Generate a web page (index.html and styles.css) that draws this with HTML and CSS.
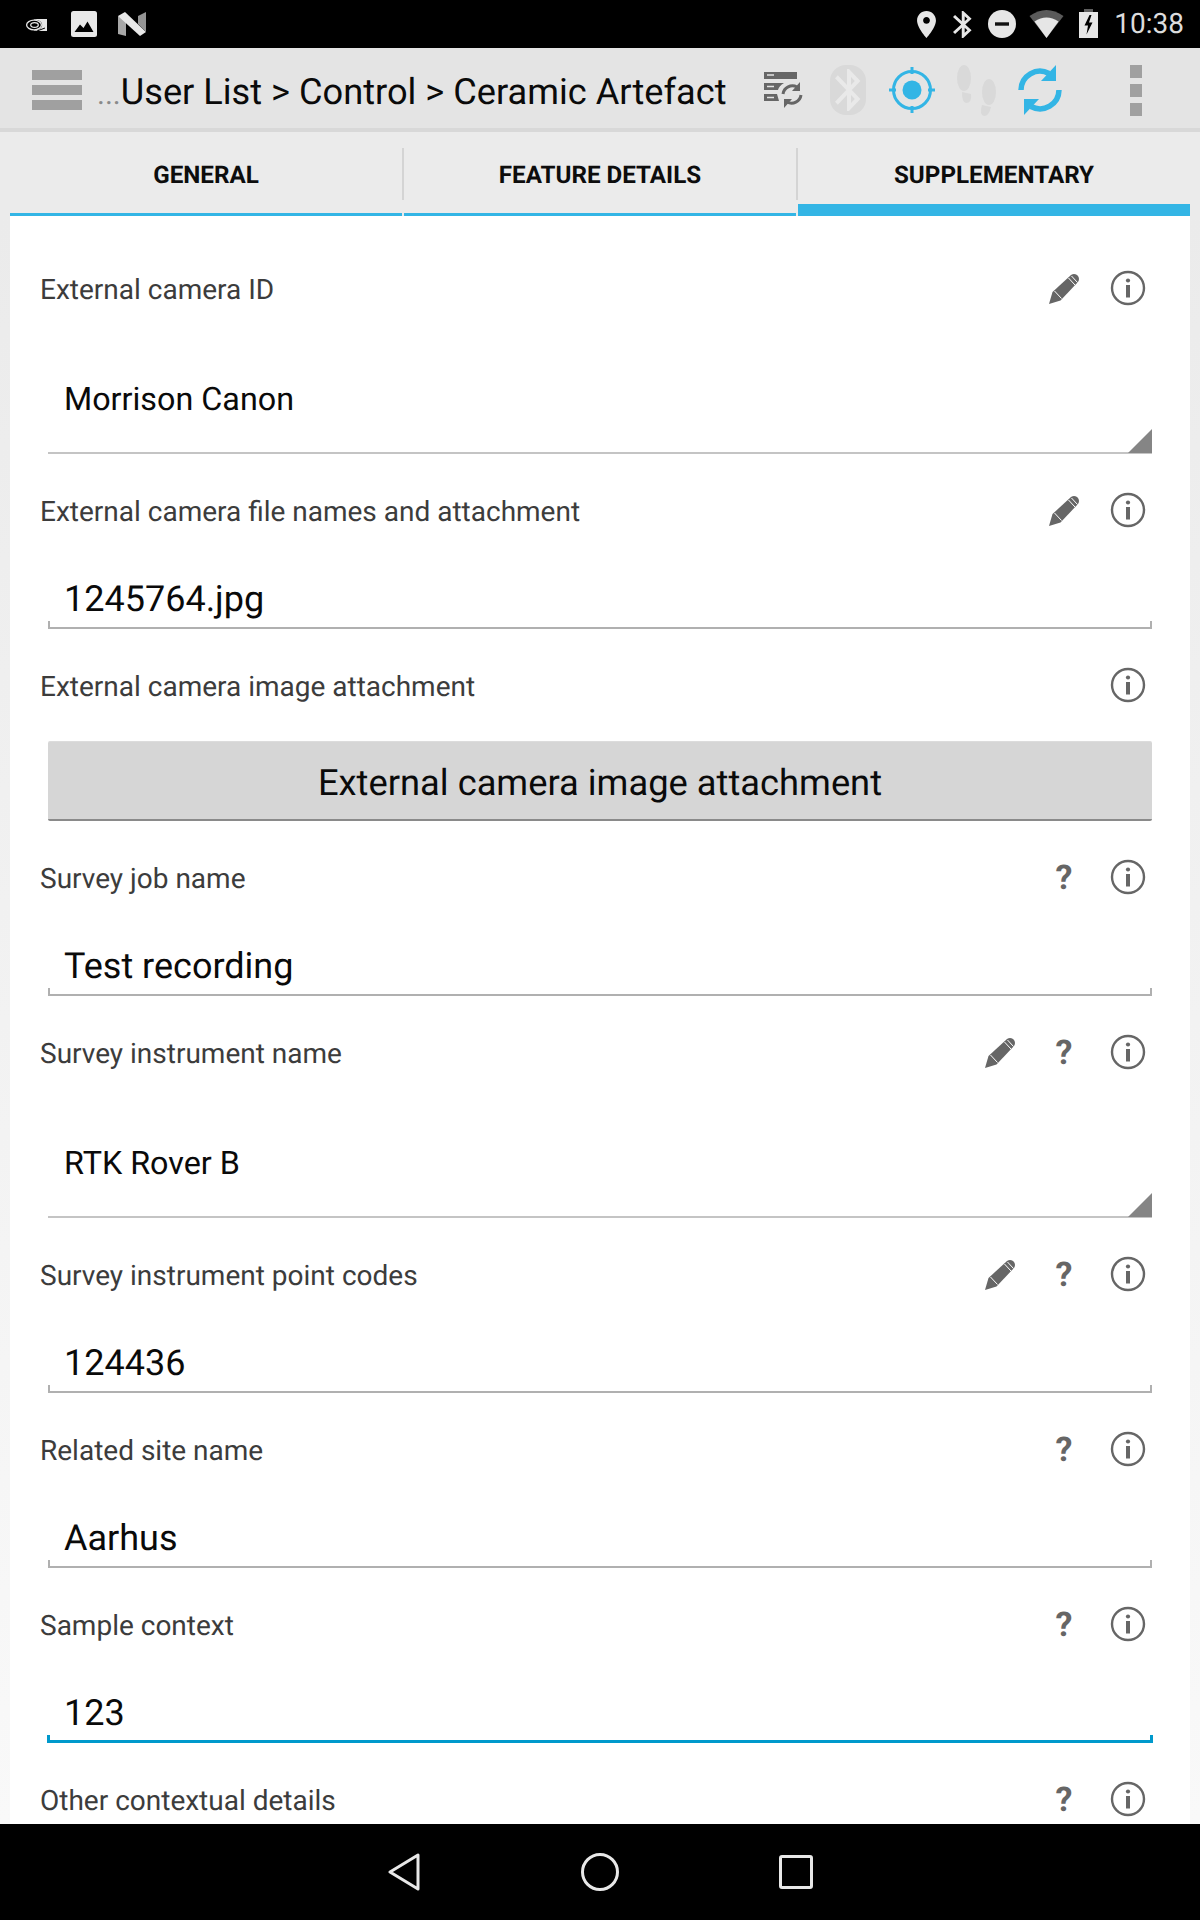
FILE: index.html
```html
<!DOCTYPE html>
<html lang="en">
<head>
<meta charset="utf-8">
<title>Ceramic Artefact</title>
<link rel="stylesheet" href="styles.css">
</head>
<body>
<svg class="defs" width="0" height="0" aria-hidden="true">
  <defs>
    <symbol id="pencil" viewBox="0 0 30 31">
      <path d="M0 31 L3.500 19 L22 2 Q25 0 28 2 L29 3 Q31 6 29 9 L11.500 27.500 Z" fill="#666"/>
      <path d="M5.500 18 L12.500 25.500 M19.500 5 L26 12 M22.500 3 L28.500 9.500" stroke="#fff" stroke-width="1" fill="none"/>
    </symbol>
    <symbol id="info" viewBox="0 0 36 36">
      <circle cx="18" cy="18" r="16" fill="none" stroke="#666" stroke-width="2.400"/>
      <circle cx="18" cy="10.500" r="2.100" fill="#666"/>
      <rect x="16" y="15" width="4" height="12.500" fill="#666"/>
    </symbol>
    <symbol id="bt" viewBox="0 0 24 24">
      <path d="M17.71 7.71 12 2h-1v7.59L6.41 5 5 6.41 10.59 12 5 17.59 6.41 19 11 14.41V22h1l5.71-5.71-4.3-4.29 4.3-4.29zM13 5.83l1.88 1.88L13 9.59V5.83zm1.88 10.46L13 18.17v-3.76l1.88 1.88z"/>
    </symbol>
  </defs>
</svg>

<div class="app">
  <header class="status">
    <div class="status-left">
      <svg class="s-nv" viewBox="0 0 22 14">
        <path d="M9 1 H22 V13 H9 Z" fill="#e6e6e6"/>
        <ellipse cx="9" cy="7" rx="8.200" ry="5.600" fill="#000"/>
        <ellipse cx="9" cy="7" rx="7.400" ry="4.800" fill="none" stroke="#e6e6e6" stroke-width="1.300"/>
        <ellipse cx="9.500" cy="7" rx="3.800" ry="2.400" fill="none" stroke="#e6e6e6" stroke-width="1.300"/>
        <path d="M12 13 L20 10" stroke="#000" stroke-width="1"/>
      </svg>
      <svg class="s-img" viewBox="0 0 26 26">
        <rect width="26" height="26" rx="2.500" fill="#e8e8e8"/>
        <path d="M3.500 21 L9 13.500 L12.500 17 L16.500 10.500 L22.500 21 Z" fill="#000"/>
      </svg>
      <svg class="s-n" viewBox="0 0 28 24">
        <path d="M0 4 L8 8 V24 L0 22 Z" fill="#a8a8a8"/>
        <path d="M0 4 L7 0 L28 20 L22 24 Z" fill="#e8e8e8"/>
        <path d="M20 4 L28 0 V20 L20 12 Z" fill="#949494"/>
      </svg>
    </div>
    <div class="status-right">
      <svg class="s-loc" viewBox="5 2 14 20"><path fill="#e6e6e6" d="M12 2C8.130 2 5 5.130 5 9c0 5.250 7 13 7 13s7-7.750 7-13c0-3.870-3.130-7-7-7zm0 9.500c-1.380 0-2.500-1.120-2.500-2.500s1.120-2.500 2.500-2.500 2.500 1.120 2.500 2.500-1.120 2.500-2.500 2.500z"/></svg>
      <svg class="s-bt" viewBox="5 2 13 20" preserveAspectRatio="none"><use href="#bt" fill="#e6e6e6" width="24" height="24"/></svg>
      <svg class="s-dnd" viewBox="0 0 28 28">
        <circle cx="14" cy="14" r="14" fill="#e6e6e6"/>
        <rect x="7" y="12.300" width="14" height="3.400" fill="#111"/>
      </svg>
      <svg class="s-wifi" viewBox="0 0 34 28">
        <path d="M0 6 Q17 -6 34 6 L17 28 Z" fill="#5a5a5a"/>
        <path d="M5 11.500 Q17 3.500 29 11.500 L17 28 Z" fill="#e6e6e6"/>
      </svg>
      <svg class="s-bat" viewBox="0 0 19 29">
        <rect x="5" width="9" height="3" fill="#5f5f5f"/>
        <rect y="3" width="19" height="26" fill="#e6e6e6"/>
        <path d="M10.500 6 L5.500 16.500 H9 L7.500 25.500 L13.500 13.500 H10 L12.500 6 Z" fill="#000"/>
      </svg>
      <span class="clock">10:38</span>
    </div>
  </header>

  <div class="toolbar">
    <div class="menu"><i></i><i></i><i></i></div>
    <div class="title"><span class="dots">...</span>User List &gt; Control &gt; Ceramic Artefact</div>
    <div class="tools">
      <span class="tool">
        <svg class="t-server" viewBox="0 0 40 36">
          <path d="M0 0 H33 V7 H0 Z M0 11 H20 Q15 14 14 18 H0 Z M0 22 H13 L15 29 H0 Z" fill="#666"/>
          <path d="M3 3 H10 M3 14.500 H10 M3 25.500 H10" stroke="#e4e4e4" stroke-width="1.500"/>
          <path d="M19 22 A9.500 9.500 0 0 1 33 15 M37 23 A9.500 9.500 0 0 1 23 30" fill="none" stroke="#666" stroke-width="3"/>
          <path d="M36 10 V19 H28 Z M20 36 V27 H28 Z" fill="#666"/>
        </svg>
      </span>
      <span class="tool">
        <svg class="t-bt" viewBox="0 0 36 50">
          <rect width="36" height="50" rx="16" fill="#d9d9d9"/>
          <svg x="3" y="4" width="30" height="42" viewBox="4 2 15 20" preserveAspectRatio="none"><use href="#bt" fill="#e9e9e9" width="24" height="24"/></svg>
        </svg>
      </span>
      <span class="tool">
        <svg class="t-gps" viewBox="0 0 48 48">
          <circle cx="24" cy="24" r="18.500" fill="none" stroke="#33b5e5" stroke-width="3"/>
          <circle cx="24" cy="24" r="9.500" fill="#33b5e5"/>
          <path d="M24 1 V8 M24 40 V47 M1 24 H8 M40 24 H47" stroke="#33b5e5" stroke-width="3"/>
        </svg>
      </span>
      <span class="tool">
        <svg class="t-feet" viewBox="0 0 39 51">
          <g fill="#d9d9d9">
            <ellipse cx="7" cy="13" rx="7" ry="13"/>
            <path d="M5 27 L14 29 Q15 38 9 38 Q5 38 5 27 Z"/>
            <ellipse cx="32" cy="27" rx="7" ry="13"/>
            <path d="M25 40 L34 42 Q32 51 27 51 Q22 50 25 40 Z"/>
          </g>
        </svg>
      </span>
      <span class="tool">
        <svg class="t-sync" viewBox="0 0 48 52">
          <path d="M5 26 A19 19 0 0 1 33 9.500 M43 26 A19 19 0 0 1 15 42.500" fill="none" stroke="#33b5e5" stroke-width="5.500"/>
          <path d="M40 1 V17 H25 Z M8 51 V35 H23 Z" fill="#33b5e5"/>
        </svg>
      </span>
      <span class="tool-gap"></span>
      <span class="tool more"><i></i><i></i><i></i></span>
    </div>
  </div>

  <nav class="tabs">
    <div class="tab"><span>GENERAL</span></div>
    <div class="tab"><span>FEATURE DETAILS</span></div>
    <div class="tab active"><span>SUPPLEMENTARY</span></div>
  </nav>

  <main class="sheet">
    <div class="content">
      <section class="row">
        <div class="row-head"><span class="label">External camera ID</span>
          <span class="icons"><span class="ico"><svg class="pencil"><use href="#pencil"/></svg></span><span class="ico"><svg class="info"><use href="#info"/></svg></span></span></div>
        <div class="field select"><span class="value small">Morrison Canon</span></div>
      </section>
      <section class="row">
        <div class="row-head"><span class="label">External camera file names and attachment</span>
          <span class="icons"><span class="ico"><svg class="pencil"><use href="#pencil"/></svg></span><span class="ico"><svg class="info"><use href="#info"/></svg></span></span></div>
        <div class="field text"><span class="value">1245764.jpg</span></div>
      </section>
      <section class="row btn-row">
        <div class="row-head"><span class="label">External camera image attachment</span>
          <span class="icons"><span class="ico"><svg class="info"><use href="#info"/></svg></span></span></div>
        <div class="btn">External camera image attachment</div>
      </section>
      <section class="row">
        <div class="row-head"><span class="label">Survey job name</span>
          <span class="icons"><span class="ico q">?</span><span class="ico"><svg class="info"><use href="#info"/></svg></span></span></div>
        <div class="field text"><span class="value">Test recording</span></div>
      </section>
      <section class="row">
        <div class="row-head"><span class="label">Survey instrument name</span>
          <span class="icons"><span class="ico"><svg class="pencil"><use href="#pencil"/></svg></span><span class="ico q">?</span><span class="ico"><svg class="info"><use href="#info"/></svg></span></span></div>
        <div class="field select"><span class="value small">RTK Rover B</span></div>
      </section>
      <section class="row">
        <div class="row-head"><span class="label">Survey instrument point codes</span>
          <span class="icons"><span class="ico"><svg class="pencil"><use href="#pencil"/></svg></span><span class="ico q">?</span><span class="ico"><svg class="info"><use href="#info"/></svg></span></span></div>
        <div class="field text"><span class="value">124436</span></div>
      </section>
      <section class="row">
        <div class="row-head"><span class="label">Related site name</span>
          <span class="icons"><span class="ico q">?</span><span class="ico"><svg class="info"><use href="#info"/></svg></span></span></div>
        <div class="field text"><span class="value">Aarhus</span></div>
      </section>
      <section class="row">
        <div class="row-head"><span class="label">Sample context</span>
          <span class="icons"><span class="ico q">?</span><span class="ico"><svg class="info"><use href="#info"/></svg></span></span></div>
        <div class="field text focus"><span class="value">123</span></div>
      </section>
      <section class="row">
        <div class="row-head"><span class="label">Other contextual details</span>
          <span class="icons"><span class="ico q">?</span><span class="ico"><svg class="info"><use href="#info"/></svg></span></span></div>
      </section>
    </div>
  </main>

  <footer class="navbar">
    <svg class="n-back" viewBox="0 0 32 38"><path d="M30 2 V36 L2 19 Z" fill="none" stroke="#e8e8e8" stroke-width="3" stroke-linejoin="round"/></svg>
    <svg class="n-home" viewBox="0 0 38 38"><circle cx="19" cy="19" r="17.500" fill="none" stroke="#e8e8e8" stroke-width="3"/></svg>
    <svg class="n-recent" viewBox="0 0 34 34"><rect x="1.500" y="1.500" width="31" height="31" rx="1.500" fill="none" stroke="#e8e8e8" stroke-width="3"/></svg>
  </footer>
</div>
</body>
</html>
```
FILE: styles.css
```css
* { box-sizing: border-box; }
html, body { margin: 0; padding: 0; }
body { font-family: Roboto, "Liberation Sans", sans-serif; background: #ebebeb; text-rendering: geometricPrecision; }
.defs { position: absolute; }
svg { display: block; flex: none; }

.app { width: 1200px; height: 1920px; display: flex; flex-direction: column; overflow: hidden; }

/* status bar */
.status { height: 48px; flex: none; background: #000; display: flex; justify-content: space-between; align-items: center; }
.status-left { display: flex; align-items: center; padding-left: 25px; }
.s-nv { width: 22px; height: 14px; margin-top: 2px; }
.s-img { width: 26px; height: 26px; margin-left: 24px; }
.s-n { width: 28px; height: 24px; margin-left: 21px; }
.status-right { display: flex; align-items: center; padding-right: 16px; }
.s-loc { width: 19px; height: 27px; }
.s-bt { width: 19px; height: 27px; margin-left: 17px; }
.s-dnd { width: 28px; height: 28px; margin-left: 16px; }
.s-wifi { width: 35px; height: 28px; margin-left: 13px; }
.s-bat { width: 19px; height: 29px; margin-left: 15px; margin-top: -1px; }
.clock { font-size: 28px; color: #dcdcdc; margin-left: 16px; line-height: 48px; }

/* toolbar */
.toolbar { height: 84px; flex: none; background: #e4e4e4; border-bottom: 4px solid #d8d8d8; display: flex; align-items: center; padding-left: 32px; }
.menu { width: 50px; display: flex; flex-direction: column; gap: 5px; margin-top: 4px; }
.menu i { display: block; height: 10px; background: #a0a0a0; }
.title { font-size: 36.2px; color: #0a0a0a; margin-left: 15px; white-space: nowrap; flex: 1; line-height: 80px; padding-top: 10px; }
.dots { font-size: 30px; color: #8a8a8a; }
.tools { display: flex; align-items: center; padding-right: 32px; height: 80px; }
.tool { width: 64px; height: 80px; padding-top: 4px; display: flex; align-items: center; justify-content: center; }
.tool-gap { width: 32px; }
.t-server { width: 40px; height: 36px; }
.t-bt { width: 36px; height: 50px; }
.t-gps { width: 48px; height: 48px; }
.t-feet { width: 39px; height: 51px; }
.t-sync { width: 48px; height: 52px; }
.more { flex-direction: column; gap: 6px; }
.more i { display: block; width: 12px; height: 13px; background: #a0a0a0; }

/* tabs */
.tabs { height: 84px; flex: none; padding: 0 10px; display: grid; grid-template-columns: repeat(3, 1fr); gap: 2px; background: #ebebeb; }
.tab { position: relative; border-bottom: 3px solid #33b5e5; display: flex; justify-content: center; padding-top: 26px; font-size: 24.2px; font-weight: 700; color: #0d0d0d; line-height: 34px; }
.tab::after { content: ""; position: absolute; right: -2px; top: 16px; width: 2px; height: 52px; background: #d4d4d4; }
.tab.active { border-bottom-width: 12px; }
.tab.active::after { display: none; }

/* form */
.sheet { flex: 1; min-height: 0; padding: 0 10px; background: linear-gradient(#ebebeb, #f9f9f9); overflow: hidden; }
.content { background: #fff; height: 100%; padding: 42px 38px 0; }
.row { margin-bottom: 26px; }
.row-head { height: 60px; margin: 0 -8px; display: flex; align-items: center; justify-content: space-between; }
.label { font-size: 28px; color: #3c3c3c; padding-top: 2px; }
.icons { display: flex; align-items: center; }
.ico { width: 64px; height: 60px; display: flex; align-items: center; justify-content: center; }
.pencil { width: 30px; height: 31px; }
.info { width: 36px; height: 36px; }
.q { font-size: 34px; font-weight: 700; color: #666; padding-top: 2px; }

.field { display: flex; align-items: flex-end; padding-left: 16px; color: #0a0a0a; }
.text { height: 89px; padding-bottom: 7px; border-bottom: 2px solid #b0b0b0;
  background: linear-gradient(#b0b0b0, #b0b0b0) left bottom / 2px 6px no-repeat, linear-gradient(#b0b0b0, #b0b0b0) right bottom / 2px 6px no-repeat; }
.focus { margin: 0 -1px; padding-left: 17px; padding-bottom: 6px; border-bottom: 3px solid #0099cc;
  background: linear-gradient(#0099cc, #0099cc) left bottom / 3px 5px no-repeat, linear-gradient(#0099cc, #0099cc) right bottom / 3px 5px no-repeat; }
.select { position: relative; height: 136px; padding-bottom: 32px; border-bottom: 2px solid #c4c4c4; }
.select::after { content: ""; position: absolute; right: 0; bottom: -1px; width: 24px; height: 24px; background: #858585; clip-path: polygon(100% 0, 100% 100%, 0 100%); }
.value { font-size: 36px; line-height: 42px; white-space: nowrap; }
.value.small { font-size: 32.3px; }

.btn { height: 80px; margin-top: 26px; padding-top: 3px; background: #d6d6d6; border-bottom: 2px solid #8a8a8a; border-top: 1px solid #dcdcdc; border-radius: 2px; display: flex; align-items: center; justify-content: center; font-size: 36.3px; color: #0a0a0a; }

/* nav bar */
.navbar { height: 96px; flex: none; background: #000; display: flex; align-items: center; justify-content: center; padding-bottom: 1px; }
.n-back { width: 32px; height: 38px; margin-right: 161px; }
.n-home { width: 38px; height: 38px; }
.n-recent { width: 34px; height: 34px; margin-left: 160px; }
```
